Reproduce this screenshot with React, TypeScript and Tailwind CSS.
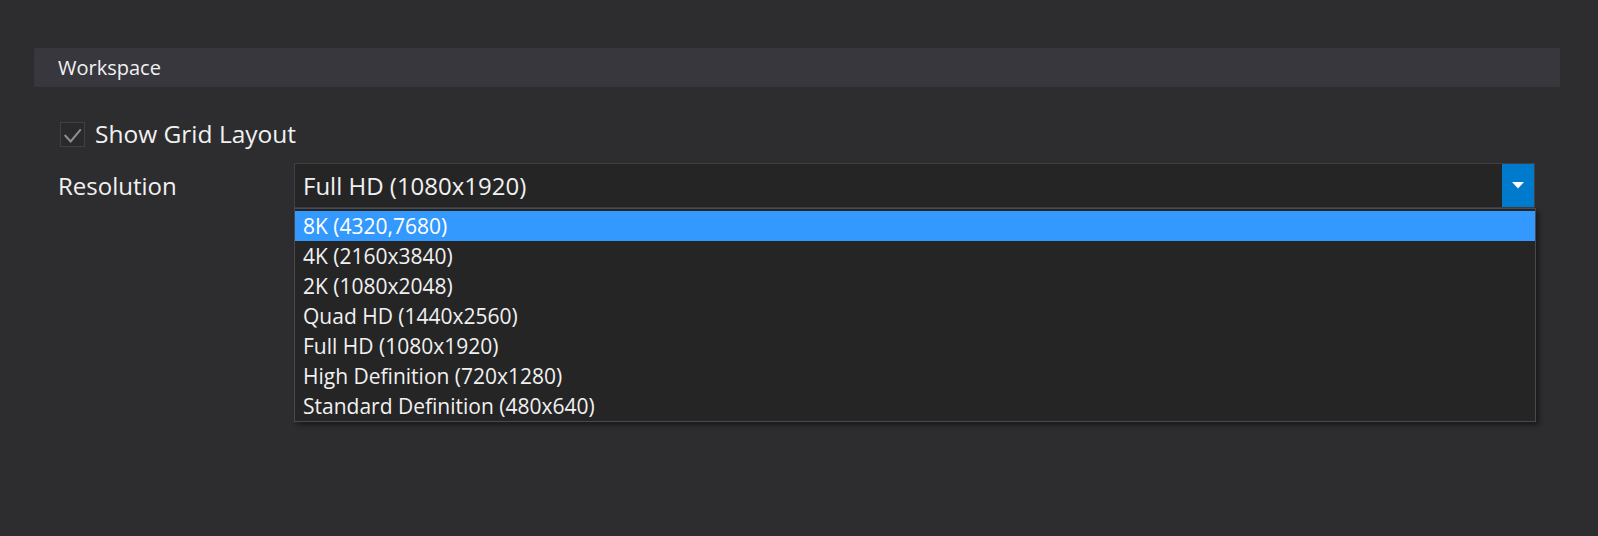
import React, { useState } from 'react';

const resolutions = [
  '8K (4320,7680)',
  '4K (2160x3840)',
  '2K (1080x2048)',
  'Quad HD (1440x2560)',
  'Full HD (1080x1920)',
  'High Definition (720x1280)',
  'Standard Definition (480x640)',
];

function CheckBox({ checked }: { checked: boolean }) {
  return (
    <div className="w-[25px] h-[25px] border border-[#3f3f46] bg-[#2a2a2c] flex items-center justify-center">
      {checked && (
        <svg width="25" height="25" viewBox="0 0 25 25">
          <path d="M4 13 L10.5 20 L21.5 7" fill="none" stroke="#8f8f8f" strokeWidth="2.2" />
        </svg>
      )}
    </div>
  );
}

function App() {
  const [showGrid] = useState(true);
  const [selected] = useState(0);

  return (
    <div className="w-full h-[536px] bg-[#2d2d30] pt-[48px] px-[34px] text-[#f1f1f1] font-['Open_Sans',sans-serif]">
      <div className="w-[1526px]">
        {/* section header */}
        <div className="h-[39px] rounded-[2px] bg-[#38373d] pl-[24px] flex items-center text-[20px] leading-none">
          Workspace
        </div>

        <div className="pl-[26px] pr-[25px]">
          <div className="mt-[35px] flex items-center gap-[10px]">
            <CheckBox checked={showGrid} />
            <span className="text-[24.5px] leading-none">Show Grid Layout</span>
          </div>

          <div className="mt-[16px] flex items-center">
            <div className="w-[236px] text-[24px] leading-none -ml-[2px]">Resolution</div>
            <div className="relative flex-1">
              <div className="h-[45px] border border-[#3f3f46] bg-[#252526] flex items-center">
                <span className="flex-1 pl-[8px] text-[24px] leading-none">Full HD (1080x1920)</span>
                <div className="w-[32px] h-full bg-[#007acc] flex items-center justify-center">
                  <svg width="12" height="7" viewBox="0 0 12 7">
                    <path d="M0 0 H12 L6 6.5 Z" fill="#ffffff" />
                  </svg>
                </div>
              </div>

              {/* open dropdown list */}
              <div className="absolute left-0 top-[45px] w-[1242px] border border-[#4a4a4d] bg-[#252526] pt-[2px] shadow-[3px_3px_5px_rgba(0,0,0,0.45)]">
                {resolutions.map((r, i) => (
                  <div
                    key={i}
                    className={
                      i === selected
                        ? 'h-[30px] flex items-center pl-[8px] text-[21px] leading-none bg-[#3399ff] text-white'
                        : 'h-[30px] flex items-center pl-[8px] text-[21px] leading-none'
                    }
                  >
                    {r}
                  </div>
                ))}
              </div>
            </div>
          </div>
        </div>
      </div>
    </div>
  );
}

export default App;
